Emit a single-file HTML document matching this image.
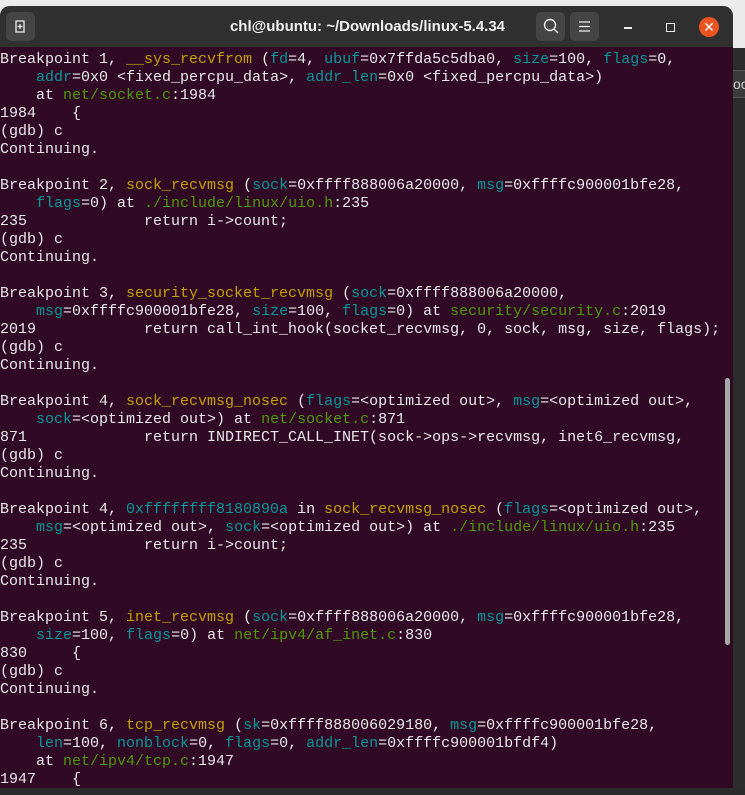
<!DOCTYPE html>
<html><head><meta charset="utf-8"><style>
body{margin:0;width:745px;height:795px;background:#ebebeb;overflow:hidden;position:relative;font-family:"Liberation Mono",monospace}
#side{position:absolute;left:733px;top:48px;width:12px;height:747px;background:#2c2c2c}
#side .b{position:absolute;top:22px;height:26px;width:12px;background:#3a3a3a;color:#ccc;font:14px "Liberation Sans",sans-serif;line-height:26px;overflow:hidden;border-top:1px solid #555;border-bottom:1px solid #555}
#bot{position:absolute;left:0;top:788px;width:745px;height:7px;background:#2b2b2b}
#win{position:absolute;left:0;top:6px;width:733px;height:782px;background:#300a24;border-radius:10px 10px 0 0;overflow:hidden}
#hdr{height:41px;background:#303030;position:relative;color:#f0f0f0}
#hdr .t{position:absolute;left:0;right:0;top:0;text-align:center;font:bold 15px "Liberation Sans",sans-serif;line-height:41px;padding-left:2px}
.btn{position:absolute;top:6px;width:29px;height:29px;background:#454545;border-radius:5px}
#term{position:absolute;left:0;top:45px;color:#e8e8e8;font-size:15px;line-height:18px;white-space:pre}
.y{color:#c4a000}.c{color:#06989a}.g{color:#4e9a06}
#sb{position:absolute;left:725px;top:372px;width:5px;height:267px;background:#a8a8a8;border-radius:3px}
</style></head><body>
<div id="side"><div class="b">oc</div></div>
<div id="bot"></div>
<div id="win">
<div id="hdr">
<div class="btn" style="left:6px"><svg width="29" height="29"><path d="M10 9h8v11h-8zM14 12v5M11.5 14.5h5" stroke="#eee" stroke-width="1.3" fill="none"/></svg></div>
<div class="t">chl@ubuntu: ~/Downloads/linux-5.4.34</div>
<div class="btn" style="left:536px"><svg width="29" height="29"><circle cx="14" cy="13" r="5.5" stroke="#eee" stroke-width="1.4" fill="none"/><path d="M18 17l4 4" stroke="#eee" stroke-width="1.4"/></svg></div>
<div class="btn" style="left:570px"><svg width="29" height="29"><path d="M9 10h11M9 14.5h11M9 19h11" stroke="#eee" stroke-width="1.3"/></svg></div>
<div style="position:absolute;left:624px;top:21px;width:8px;height:1.5px;background:#eee"></div>
<div style="position:absolute;left:666px;top:17px;width:7px;height:7px;border:1.5px solid #eee"></div>
<div style="position:absolute;left:699px;top:11px;width:20px;height:20px;border-radius:50%;background:#e95420;color:#fff;text-align:center;font:14px/20px 'Liberation Sans',sans-serif">✕</div>
</div>
<div id="term">Breakpoint 1, <span class="y">__sys_recvfrom</span> (<span class="c">fd</span>=4, <span class="c">ubuf</span>=0x7ffda5c5dba0, <span class="c">size</span>=100, <span class="c">flags</span>=0,
    <span class="c">addr</span>=0x0 &lt;fixed_percpu_data&gt;, <span class="c">addr_len</span>=0x0 &lt;fixed_percpu_data&gt;)
    at <span class="g">net/socket.c</span>:1984
1984    {
(gdb) c
Continuing.

Breakpoint 2, <span class="y">sock_recvmsg</span> (<span class="c">sock</span>=0xffff888006a20000, <span class="c">msg</span>=0xffffc900001bfe28,
    <span class="c">flags</span>=0) at <span class="g">./include/linux/uio.h</span>:235
235             return i-&gt;count;
(gdb) c
Continuing.

Breakpoint 3, <span class="y">security_socket_recvmsg</span> (<span class="c">sock</span>=0xffff888006a20000,
    <span class="c">msg</span>=0xffffc900001bfe28, <span class="c">size</span>=100, <span class="c">flags</span>=0) at <span class="g">security/security.c</span>:2019
2019            return call_int_hook(socket_recvmsg, 0, sock, msg, size, flags);
(gdb) c
Continuing.

Breakpoint 4, <span class="y">sock_recvmsg_nosec</span> (<span class="c">flags</span>=&lt;optimized out&gt;, <span class="c">msg</span>=&lt;optimized out&gt;,
    <span class="c">sock</span>=&lt;optimized out&gt;) at <span class="g">net/socket.c</span>:871
871             return INDIRECT_CALL_INET(sock-&gt;ops-&gt;recvmsg, inet6_recvmsg,
(gdb) c
Continuing.

Breakpoint 4, <span class="c">0xffffffff8180890a</span> in <span class="y">sock_recvmsg_nosec</span> (<span class="c">flags</span>=&lt;optimized out&gt;,
    <span class="c">msg</span>=&lt;optimized out&gt;, <span class="c">sock</span>=&lt;optimized out&gt;) at <span class="g">./include/linux/uio.h</span>:235
235             return i-&gt;count;
(gdb) c
Continuing.

Breakpoint 5, <span class="y">inet_recvmsg</span> (<span class="c">sock</span>=0xffff888006a20000, <span class="c">msg</span>=0xffffc900001bfe28,
    <span class="c">size</span>=100, <span class="c">flags</span>=0) at <span class="g">net/ipv4/af_inet.c</span>:830
830     {
(gdb) c
Continuing.

Breakpoint 6, <span class="y">tcp_recvmsg</span> (<span class="c">sk</span>=0xffff888006029180, <span class="c">msg</span>=0xffffc900001bfe28,
    <span class="c">len</span>=100, <span class="c">nonblock</span>=0, <span class="c">flags</span>=0, <span class="c">addr_len</span>=0xffffc900001bfdf4)
    at <span class="g">net/ipv4/tcp.c</span>:1947
1947    {</div>
<div id="sb"></div>
</div>
</body></html>
